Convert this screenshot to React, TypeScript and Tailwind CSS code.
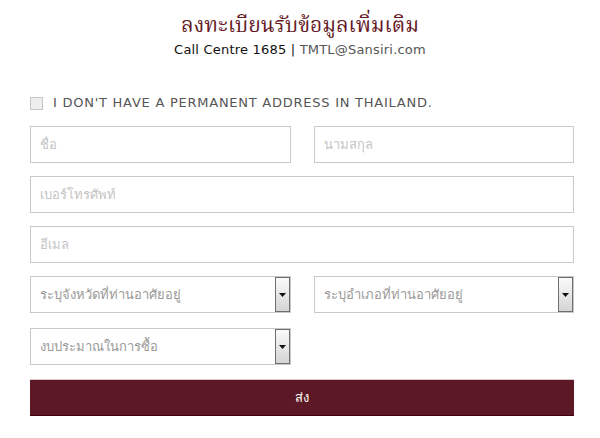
import React from "react";

const inputCls =
  "h-[37px] w-full border border-[#c8c8c8] bg-white px-[9px] text-[13px] text-[#333] placeholder:text-[#c4c4c4] outline-none font-['Tahoma','DejaVu_Sans',sans-serif]";

function SelectBox({ label }: { label: string }) {
  return (
    <div className="flex h-[37px] w-full items-center border border-[#c8c8c8] bg-white">
      <span className="flex-1 px-[9px] text-[13px] text-[#9a9a9a] font-['Tahoma','DejaVu_Sans',sans-serif]">
        {label}
      </span>
      <span className="flex h-full w-[15px] items-center justify-center border border-[#6e6e6e] bg-gradient-to-b from-[#fbfbfb] to-[#d4d4d4]">
        <svg width="7" height="4" viewBox="0 0 7 4">
          <path d="M0 0h7L3.5 4z" fill="#111" />
        </svg>
      </span>
    </div>
  );
}

export default function App() {
  return (
    <div className="h-[438px] w-[600px] bg-white font-['DejaVu_Sans',sans-serif]">
      {/* ヘッダー */}
      <header className="pt-[13px] text-center">
        <h1 className="text-[21px] leading-[28px] text-[#651a26] font-['Norasi','Noto_Serif_Thai','Liberation_Serif',serif]">
          ลงทะเบียนรับข้อมูลเพิ่มเติม
        </h1>
        <p className="mt-[1px] text-[13px] leading-[16px] tracking-[0.2px] text-[#111]">
          Call Centre 1685 | <span className="text-[#555]">TMTL@Sansiri.com</span>
        </p>
      </header>

      <div className="pl-[30px] pr-[26px]">
        {/* チェックボックス */}
        <label className="mt-[38px] flex items-center gap-[10px]">
          <span className="h-[13px] w-[13px] border border-[#c6c6c6] bg-[#eeeeee]" />
          <span className="text-[13px] leading-[14px] tracking-[0.75px] text-[#555]">
            I DON'T HAVE A PERMANENT ADDRESS IN THAILAND.
          </span>
        </label>

        <div className="mt-[16px] grid grid-cols-2 gap-x-[23px]">
          <input className={inputCls} placeholder="ชื่อ" />
          <input className={inputCls} placeholder="นามสกุล" />
        </div>
        <input className={`${inputCls} mt-[13px]`} placeholder="เบอร์โทรศัพท์" />
        <input className={`${inputCls} mt-[13px]`} placeholder="อีเมล" />

        <div className="mt-[13px] grid grid-cols-2 gap-x-[23px]">
          <SelectBox label="ระบุจังหวัดที่ท่านอาศัยอยู่" />
          <SelectBox label="ระบุอำเภอที่ท่านอาศัยอยู่" />
        </div>
        <div className="mt-[15px] grid grid-cols-2 gap-x-[23px]">
          <SelectBox label="งบประมาณในการซื้อ" />
        </div>

        <button className="mt-[14px] h-[37px] w-full border-t border-t-[#d8c8cb] border-b border-b-[#3f0010] bg-[#5c1825] text-[13px] text-white font-['Tahoma','DejaVu_Sans',sans-serif]">
          ส่ง
        </button>
      </div>
    </div>
  );
}
